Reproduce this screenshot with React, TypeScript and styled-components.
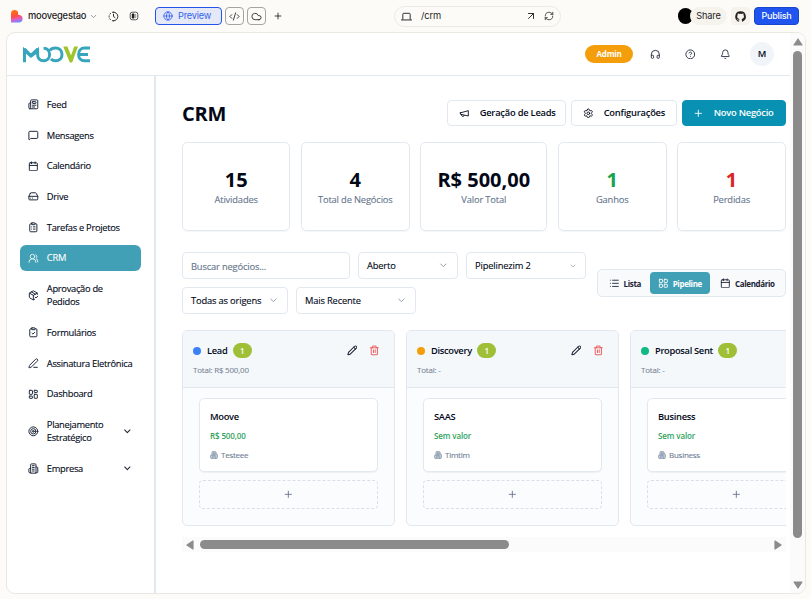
import React from 'react';
import styled, { createGlobalStyle } from 'styled-components';
import {
  Newspaper, MessageSquare, Calendar, HardDrive, ClipboardList, UsersRound, PackageCheck,
  ClipboardCheck, PenLine, LayoutDashboard, Target, ChevronDown,
  Settings, Plus, List, LayoutGrid, Pencil, Trash2, Globe, CodeXml, Cloud,
  ArrowUpRight, RefreshCw, Headphones, CircleHelp, Bell,
} from 'lucide-react';

const Global = createGlobalStyle`
  * { box-sizing: border-box; }
  html, body { margin: 0; overflow: hidden; }
  body { background: #fcfbf8; font-family: "Open Sans", "Noto Sans", sans-serif; font-size: 9.33px; color: #020817; }
  svg { flex: none; display: block; }
`;

const Page = styled.div`
  width: 811px; height: 599px; display: flex; flex-direction: column;
  padding: 0 5px 5px 6px; background: #fcfbf8;
`;

const TopBar = styled.div`
  height: 32px; flex: none; display: flex; align-items: center; color: #1c1c1c;
  font-family: Inter, Roboto, sans-serif; padding: 0 5px 0 5px;
`;
const Spacer = styled.div<{ $w: number }>`width: ${p => p.$w}px; flex: none;`;
const ProjectName = styled.div`font-size: 9.33px; font-weight: 500; width: 58px; white-space: nowrap; letter-spacing: -0.2px; margin-top: -2px;`;
const PreviewTab = styled.div`
  width: 67px; height: 18px; border: 1px solid #2453eb; border-radius: 4px; background: #e4e8f7;
  color: #3463ee; display: flex; align-items: center; padding-left: 7px; gap: 5px; font-size: 9.2px;
  letter-spacing: -0.2px; flex: none;
`;
const Raised = styled.span`display: block; margin-top: -2px; white-space: nowrap;`;
const ToolButton = styled.div`
  width: 19px; height: 18px; border: 1px solid #a5a4a1; border-radius: 4px; margin-left: 3px;
  display: flex; align-items: center; justify-content: center; flex: none;
`;
const AddressBar = styled.div`
  width: 167px; height: 21px; border: 1px solid #eceae4; border-radius: 11px; flex: none;
  display: flex; align-items: center; padding: 0 6px 0 6px; font-size: 9.33px;
`;
const Path = styled.span`flex: 1; margin: -2px 0 0 9px; letter-spacing: -0.1px;`;
const Avatar = styled.div`width: 15px; height: 16px; border-radius: 8px; background: #000; flex: none;`;
const ShareButton = styled.div`
  height: 18px; width: 37px; margin-left: -3px; border-radius: 9px; background: #f5f3ec; flex: none;
  display: flex; align-items: center; justify-content: center; font-size: 9.2px; letter-spacing: -0.1px;
`;
const GitButton = styled.div`
  width: 19px; height: 18px; border-radius: 4px; background: #f5f3ec; margin: 0 4px; flex: none;
  display: flex; align-items: center; justify-content: center;
`;
const PublishButton = styled.div`
  width: 45px; height: 18px; border-radius: 4px; background: #1f55ee; border: 1px solid #1746cc; color: #fff; flex: none;
  display: flex; align-items: center; justify-content: center; font-size: 9px; font-weight: 500; letter-spacing: -0.2px;
`;

const Frame = styled.div`
  flex: 1; min-height: 0; border: 1px solid #eae8e1; border-radius: 9px; background: #fff; display: flex; overflow: hidden;
`;
const AppArea = styled.div`flex: 1; min-width: 0; display: flex; flex-direction: column;`;
const Header = styled.div`
  height: 43px; flex: none; border-bottom: 1px solid #e2e8f0; display: flex; align-items: center;
  padding: 0 16px; color: #1e2637;
`;
const HeaderActions = styled.div`margin-left: auto; display: flex; align-items: center;`;
const AdminBadge = styled.div`
  width: 48px; height: 18px; border-radius: 9px; background: #f59e0b; color: #fff; font-weight: 700;
  font-size: 8px; letter-spacing: -0.2px; padding-bottom: 1px; display: flex; align-items: center;
  justify-content: center; margin-right: 17px;
`;
const UserBubble = styled.div`
  width: 24px; height: 24px; border-radius: 12px; background: #f1f5f9; color: #020817; font-weight: 600;
  display: flex; align-items: center; justify-content: center; font-size: 9.33px; padding-bottom: 1px;
`;
const Body = styled.div`flex: 1; min-height: 0; display: flex;`;
const Sidebar = styled.nav`
  width: 149px; flex: none; border-right: 2px solid #e2e8f0; padding: 15.33px 13px 0; display: flex;
  flex-direction: column; gap: 4px;
`;
const NavItem = styled.div<{ $active?: boolean; $tall?: boolean }>`
  height: ${p => (p.$tall ? 40 : 26.67)}px; flex: none; display: flex; align-items: center; border-radius: 6px;
  padding: 0 8px; gap: 8.2px; background: ${p => (p.$active ? '#41a0b5' : 'transparent')};
  color: ${p => (p.$active ? '#fff' : '#020817')};
  svg { color: ${p => (p.$active ? '#e3f1f4' : '#1d2638')}; }
`;
const NavLabel = styled.span`
  flex: 1; line-height: 13px; white-space: pre; letter-spacing: -0.3px; margin-top: -0.4px;
  -webkit-text-stroke: 0.12px currentColor;
`;

const Main = styled.main`flex: 1; min-width: 0; padding: 24px 4px 0 26px; display: flex; flex-direction: column;`;
const TitleRow = styled.div`display: flex; align-items: center; height: 26px; gap: 5px;`;
const Title = styled.h1`margin: 2px 0 0; flex: 1; font-size: 20px; line-height: 26px; font-weight: 700; letter-spacing: -0.2px;`;
const ActionButton = styled.div<{ $w: number; $primary?: boolean }>`
  width: ${p => p.$w}px; height: 26px; border-radius: 4px; display: flex; align-items: center; flex: none;
  padding: 0 0 1px ${p => (p.$primary ? 10 : 11)}px; gap: 10px; font-weight: 600; letter-spacing: -0.22px; white-space: nowrap;
  border: 1px solid ${p => (p.$primary ? '#0891b2' : '#e2e8f0')};
  background: ${p => (p.$primary ? '#0891b2' : '#fff')}; color: ${p => (p.$primary ? '#fff' : '#020817')};
  svg { margin-top: 1px; }
`;
const Stats = styled.div`
  margin-top: 16px; display: grid; grid-template-columns: 108.3px 108.7px 127px 108.7px 108.7px; gap: 10.65px;
`;
const Stat = styled.div`
  height: 89px; border: 1px solid #e2e8f0; border-radius: 5.33px; display: flex; flex-direction: column;
  align-items: center; justify-content: center; box-shadow: 0 1px 1px rgba(0,0,0,.04);
`;
const StatValue = styled.div<{ $color?: string }>`
  font-size: 20px; line-height: 22px; font-weight: 700; color: ${p => p.$color || '#020817'}; white-space: nowrap;
  margin-top: 2px;
`;
const StatLabel = styled.div`line-height: 13px; color: #64748b; margin-top: 2px; letter-spacing: -0.15px; -webkit-text-stroke: 0.1px currentColor;`;

const Controls = styled.div`margin-top: 21px; display: flex; align-items: center;`;
const Filters = styled.div`width: 415px; display: flex; flex-wrap: wrap; gap: 8px;`;
const Field = styled.div<{ $w: number; $muted?: boolean }>`
  width: ${p => p.$w}px; height: 27px; border: 1px solid #e2e8f0; border-radius: 4px; display: flex;
  align-items: center; justify-content: space-between; padding: ${p => (p.$muted ? '2px' : '0')} 8px 0;
  color: ${p => (p.$muted ? '#64748b' : '#020817')}; white-space: nowrap; letter-spacing: -0.16px;
  -webkit-text-stroke: 0.12px currentColor;
  svg { color: #8c92a0; }
`;
const ViewToggle = styled.div`
  width: 189px; height: 28px; border: 1px solid #e2e8f0; border-radius: 5px; background: #f8fafc;
  display: flex; align-items: center; padding-left: 2px;
`;
const ViewOption = styled.div<{ $w: number; $active?: boolean }>`
  width: ${p => p.$w}px; height: 22px; border-radius: 4px; display: flex; align-items: center; justify-content: center;
  gap: 4px; font-size: 8px; font-weight: 700; letter-spacing: -0.35px; white-space: nowrap;
  background: ${p => (p.$active ? '#41a0b5' : 'transparent')}; color: ${p => (p.$active ? '#fff' : '#1a2335')};
`;

const Board = styled.div`margin-top: 16px; height: 196px; display: flex; gap: 11px; overflow: hidden; flex: none;`;
const Column = styled.section`
  width: 213px; flex: none; border: 1px solid #e2e8f0; border-radius: 5px; background: #fbfcfe; overflow: hidden;
`;
const ColumnHead = styled.div`height: 57px; background: #f4f8fb; border-bottom: 1px solid #e2e8f0; padding: 11px 14px 0 10px;`;
const HeadLine = styled.div`display: flex; align-items: center; height: 17px;`;
const Dot = styled.span<{ $color: string }>`width: 8px; height: 8px; border-radius: 4px; background: ${p => p.$color};`;
const StageName = styled.span`font-weight: 600; margin: -1px 5.5px 0 6px; letter-spacing: -0.32px;`;
const Count = styled.span`
  width: 19px; height: 15px; border-radius: 7.5px; background: #9fbf37; color: #fff; font-size: 8px;
  font-weight: 600; display: flex; align-items: center; justify-content: center; padding-bottom: 1px;
`;
const HeadIcons = styled.div`margin-left: auto; display: flex; align-items: center; gap: 12px; color: #1b2436;`;
const Total = styled.div`color: #7a8494; font-size: 8px; line-height: 12px; margin-top: 5px; letter-spacing: -0.22px; -webkit-text-stroke: 0.1px currentColor;`;
const ColumnBody = styled.div`padding: 10px 16px 0;`;
const Deal = styled.div`
  height: 74px; border: 1px solid #e2e8f0; border-radius: 5px; background: #fff; padding: 11px 10px 0;
  box-shadow: 0 1px 1px rgba(0,0,0,.05);
`;
const DealName = styled.div`font-weight: 600; line-height: 14px; letter-spacing: -0.3px;`;
const DealValue = styled.div`color: #2fa35c; font-size: 8px; font-weight: 600; line-height: 12px; margin-top: 6px; letter-spacing: -0.12px;`;
const DealOrg = styled.div`
  display: flex; align-items: center; gap: 3px; color: #6b7b92; font-size: 8px; line-height: 12px; margin-top: 7px;
  letter-spacing: -0.25px; -webkit-text-stroke: 0.1px currentColor;
`;
const AddDeal = styled.div`
  height: 29px; margin-top: 8px; border: 1px dashed #d9dfe6; border-radius: 4px; display: flex;
  align-items: center; justify-content: center; color: #64748b;
`;
const HTrack = styled.div`
  height: 15px; margin-top: 11px; background: #fbfbfb; display: flex; align-items: center; padding: 0 4px; flex: none;
`;
const HThumb = styled.div`width: 309px; height: 9px; border-radius: 5px; background: #8b8b8b; margin: 0 auto 0 6px;`;
const VTrack = styled.div`
  width: 15px; flex: none; background: #fbfbfb; display: flex; flex-direction: column; align-items: center; padding: 5px 0 4px;
`;
const VThumb = styled.div`width: 9px; height: 487px; border-radius: 5px; background: #8b8b8b; margin: 5px 0 auto;`;

const Arrow = ({ dir }: { dir: 'up' | 'down' | 'left' | 'right' }) => {
  const turn = { up: 0, right: 90, down: 180, left: 270 }[dir];
  const flat = dir === 'up' || dir === 'down';
  return (
    <svg width={flat ? 10 : 8} height={flat ? 8 : 10} viewBox={flat ? '-5 -4 10 8' : '-4 -5 8 10'}>
      <path d="M0-3L4 3H-4Z" transform={`rotate(${turn})`} fill="#8b8b8b" stroke="#8b8b8b" strokeWidth="1.2" strokeLinejoin="round" />
    </svg>
  );
};

const HeartLogo = () => (
  <svg width="12" height="13" viewBox="0 0 12 13">
    <defs>
      <linearGradient id="heart" x1="0.3" y1="0" x2="0.5" y2="1">
        <stop offset="0.15" stopColor="#ff6a1a" />
        <stop offset="0.5" stopColor="#fb4d47" />
        <stop offset="0.72" stopColor="#e55bc0" />
        <stop offset="1" stopColor="#6b8cff" />
      </linearGradient>
    </defs>
    <path d="M0 3.6A3.6 3.6 0 0 1 7.2 3.6V5H8.4A3.8 3.8 0 0 1 8.4 12.5H0Z" fill="url(#heart)" />
  </svg>
);

const BrandLogo = () => (
  <svg width="67" height="17" viewBox="0 0 67 17" fill="none" strokeWidth="3">
    <g stroke="#36a5bd">
      <path d="M1.5 16.3V3L7.9 9.6L14.6 3V8.5C14.6 12.5 17.2 14.7 20.6 14.7C24.2 14.7 26.6 12 26.6 8.5C26.6 5 24.4 2.2 20.6 2.2" strokeLinejoin="bevel" />
      <path d="M0 .8L7.9 8.9L16 .8V6L7.9 12L0 5Z" fill="#36a5bd" stroke="none" />
      <path d="M26.8 4.5C28 2.8 30 2 32.4 2C36.4 2 39 4.8 39 8.5C39 12.2 36.4 14.8 32.6 14.8C30.6 14.8 29.1 14.1 28 12.9" />
      <path d="M67 2.1H61.4C57.8 2.1 55.6 4.8 55.6 8.5C55.6 12.2 58 14.8 61.4 14.8H67M57 8.4H65" />
    </g>
    <path d="M40.2 .6H44.4L48 9.6L51.2 .6H55L49.2 16.4H46.8Z" fill="#a0c52a" />
  </svg>
);

const GithubMark = () => (
  <svg width="11" height="11" viewBox="0 0 24 24" fill="#222">
    <path d="M12 .8a11.5 11.5 0 0 0-3.6 22.4c.6.1.8-.2.8-.6v-2.1c-3.2.7-3.9-1.4-3.9-1.4-.5-1.3-1.3-1.7-1.3-1.7-1-.7.1-.7.1-.7 1.2.1 1.8 1.2 1.8 1.2 1 1.8 2.7 1.3 3.4 1 .1-.8.4-1.3.7-1.6-2.5-.3-5.2-1.3-5.2-5.7 0-1.2.4-2.3 1.2-3.1-.1-.3-.5-1.5.1-3.1 0 0 1-.3 3.2 1.2a11 11 0 0 1 5.8 0c2.2-1.5 3.2-1.2 3.2-1.2.6 1.6.2 2.8.1 3.1.8.8 1.2 1.9 1.2 3.1 0 4.4-2.7 5.4-5.3 5.7.4.4.8 1.1.8 2.1v3.2c0 .4.2.7.8.6A11.5 11.5 0 0 0 12 .8Z" />
  </svg>
);

const PanelGlyph = () => (
  <svg width="10" height="10" viewBox="0 0 10 10">
    <rect x="1.2" y="1.2" width="7.6" height="7.6" rx="2" fill="none" stroke="#555" />
    <rect x="2.8" y="2.6" width="2.6" height="4.8" rx=".6" fill="#222" />
    <path d="M6.7 3V7" stroke="#777" strokeWidth=".8" />
  </svg>
);

type GlyphProps = { size?: number; fill?: string; strokeWidth?: number };
const Glyph = ({ size = 10.67, fill = 'none', strokeWidth = 2, children }: GlyphProps & { children: React.ReactNode }) => (
  <svg width={size} height={size} viewBox="0 0 24 24" fill={fill} stroke="currentColor" strokeWidth={strokeWidth} strokeLinecap="round" strokeLinejoin="round">
    {children}
  </svg>
);
const Building = (p: GlyphProps) => (
  <Glyph {...p}>
    <path d="M6 22V4a2 2 0 0 1 2-2h8a2 2 0 0 1 2 2v18Z" />
    <path d="M6 12H4a2 2 0 0 0-2 2v6a2 2 0 0 0 2 2h2M18 9h2a2 2 0 0 1 2 2v9a2 2 0 0 1-2 2h-2" />
    <path d="M10 6h4M10 10h4M10 14h4M10 18h4" />
  </Glyph>
);
const MegaphoneOutline = (p: GlyphProps) => (
  <Glyph {...p}><path d="m3 11 18-5v12L3 14v-3zM11.6 16.8a3 3 0 1 1-5.8-1.6" /></Glyph>
);
const RecentClock = () => (
  <Glyph size={11}>
    <path d="M12 2.5a9.5 9.5 0 0 1 0 19" />
    <path d="M12 21.5a9.5 9.5 0 0 1 0-19" strokeDasharray="2.5 4.2" />
    <path d="M12 7v5l3.2 2.4" />
  </Glyph>
);
const LaptopOutline = () => (
  <Glyph size={11}><path d="M4 18V7a2 2 0 0 1 2-2h12a2 2 0 0 1 2 2v11M1 19.5h22" /></Glyph>
);

const S = 10.67;
const navItems: { label: string; Icon: React.ElementType; active?: boolean; tall?: boolean; more?: boolean }[] = [
  { label: 'Feed', Icon: Newspaper },
  { label: 'Mensagens', Icon: MessageSquare },
  { label: 'Calendário', Icon: Calendar },
  { label: 'Drive', Icon: HardDrive },
  { label: 'Tarefas e Projetos', Icon: ClipboardList },
  { label: 'CRM', Icon: UsersRound, active: true },
  { label: 'Aprovação de\nPedidos', Icon: PackageCheck, tall: true },
  { label: 'Formulários', Icon: ClipboardCheck },
  { label: 'Assinatura Eletrônica', Icon: PenLine },
  { label: 'Dashboard', Icon: LayoutDashboard },
  { label: 'Planejamento\nEstratégico', Icon: Target, tall: true, more: true },
  { label: 'Empresa', Icon: Building, more: true },
];

const stats = [
  { value: '15', label: 'Atividades' },
  { value: '4', label: 'Total de Negócios' },
  { value: 'R$ 500,00', label: 'Valor Total' },
  { value: '1', label: 'Ganhos', color: '#16a34a' },
  { value: '1', label: 'Perdidas', color: '#dc2626' },
];

const columns = [
  { name: 'Lead', color: '#3b82f6', total: 'R$ 500,00', deal: 'Moove', value: 'R$ 500,00', org: 'Testeee' },
  { name: 'Discovery', color: '#f59e0b', total: '-', deal: 'SAAS', value: 'Sem valor', org: 'Timtim' },
  { name: 'Proposal Sent', color: '#10b981', total: '-', deal: 'Business', value: 'Sem valor', org: 'Business' },
];

const Select = ({ w, label, chevron = S }: { w: number; label: string; chevron?: number }) => (
  <Field $w={w}><span>{label}</span><ChevronDown size={chevron} /></Field>
);

export default function App() {
  return (
    <Page>
      <Global />
      <TopBar>
        <HeartLogo /><Spacer $w={5} />
        <ProjectName>moovegestao</ProjectName><Spacer $w={3} />
        <ChevronDown size={9} color="#777" /><Spacer $w={10} />
        <RecentClock /><Spacer $w={10} />
        <PanelGlyph /><Spacer $w={16} />
        <PreviewTab><Globe size={10} /><Raised>Preview</Raised></PreviewTab>
        <ToolButton><CodeXml size={11} strokeWidth={1.8} /></ToolButton>
        <ToolButton><Cloud size={11} strokeWidth={1.8} /></ToolButton>
        <Spacer $w={7} /><Plus size={10} />
        <Spacer $w={111} />
        <AddressBar>
          <LaptopOutline /><Path>/crm</Path>
          <ArrowUpRight size={12} strokeWidth={1.8} /><Spacer $w={7} /><RefreshCw size={10} strokeWidth={1.8} />
        </AddressBar>
        <Spacer $w={117} />
        <Avatar /><ShareButton><Raised>Share</Raised></ShareButton>
        <GitButton><GithubMark /></GitButton>
        <PublishButton><Raised>Publish</Raised></PublishButton>
      </TopBar>
      <Frame>
        <AppArea>
          <Header>
            <BrandLogo />
            <HeaderActions>
              <AdminBadge>Admin</AdminBadge>
              <Headphones size={S} /><Spacer $w={24} />
              <CircleHelp size={S} /><Spacer $w={25} />
              <Bell size={S} /><Spacer $w={19} />
              <UserBubble>M</UserBubble>
            </HeaderActions>
          </Header>
          <Body>
            <Sidebar>
              {navItems.map(({ label, Icon, active, tall, more }) => (
                <NavItem key={label} $active={active} $tall={tall}>
                  <Icon size={S} strokeWidth={2.2} />
                  <NavLabel>{label}</NavLabel>
                  {more && <ChevronDown size={S} strokeWidth={2.4} />}
                </NavItem>
              ))}
            </Sidebar>
            <Main>
              <TitleRow>
                <Title>CRM</Title>
                <ActionButton $w={119}><MegaphoneOutline size={S} />Geração de Leads</ActionButton>
                <ActionButton $w={106}><Settings size={S} />Configurações</ActionButton>
                <ActionButton $w={104} $primary><Plus size={S} />Novo Negócio</ActionButton>
              </TitleRow>
              <Stats>
                {stats.map(s => (
                  <Stat key={s.label}>
                    <StatValue $color={s.color}>{s.value}</StatValue>
                    <StatLabel>{s.label}</StatLabel>
                  </Stat>
                ))}
              </Stats>
              <Controls>
                <Filters>
                  <Field $w={168} $muted>Buscar negócios...</Field>
                  <Select w={100} label="Aberto" />
                  <Select w={120} label="Pipelinezim 2" chevron={8} />
                  <Select w={106} label="Todas as origens" />
                  <Select w={120} label="Mais Recente" />
                </Filters>
                <ViewToggle>
                  <ViewOption $w={50}><List size={S} />Lista</ViewOption>
                  <ViewOption $w={60} $active><LayoutGrid size={S} />Pipeline</ViewOption>
                  <ViewOption $w={75}><Calendar size={S} />Calendário</ViewOption>
                </ViewToggle>
              </Controls>
              <Board>
                {columns.map(c => (
                  <Column key={c.name}>
                    <ColumnHead>
                      <HeadLine>
                        <Dot $color={c.color} />
                        <StageName>{c.name}</StageName>
                        <Count>1</Count>
                        <HeadIcons><Pencil size={S} strokeWidth={2.3} /><Trash2 size={S} strokeWidth={2.3} color="#ec6363" /></HeadIcons>
                      </HeadLine>
                      <Total>Total: {c.total}</Total>
                    </ColumnHead>
                    <ColumnBody>
                      <Deal>
                        <DealName>{c.deal}</DealName>
                        <DealValue>{c.value}</DealValue>
                        <DealOrg><Building size={8} fill="#cbd5e1" />{c.org}</DealOrg>
                      </Deal>
                      <AddDeal><Plus size={S} /></AddDeal>
                    </ColumnBody>
                  </Column>
                ))}
              </Board>
              <HTrack><Arrow dir="left" /><HThumb /><Arrow dir="right" /></HTrack>
            </Main>
          </Body>
        </AppArea>
        <VTrack><Arrow dir="up" /><VThumb /><Arrow dir="down" /></VTrack>
      </Frame>
    </Page>
  );
}
